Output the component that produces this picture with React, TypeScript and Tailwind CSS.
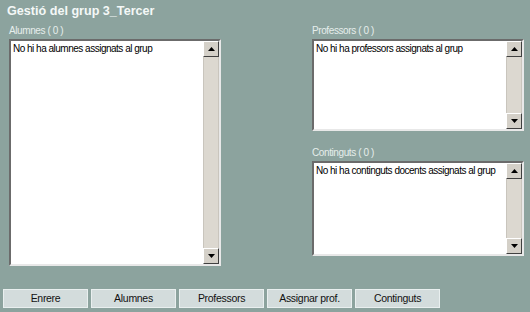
import React from "react";

// Gestió del grup - classic intranet panel with three list boxes

function Arrow({ down }: { down?: boolean }) {
  return (
    <div className="w-[16px] h-[16px] bg-[#d4d0c8] border border-t-white border-l-white border-r-[#404040] border-b-[#404040] flex items-center justify-center">
      <svg width="7" height="4" viewBox="0 0 7 4">
        {down ? <polygon points="0,0 7,0 3.5,4" fill="#000" /> : <polygon points="0,4 7,4 3.5,0" fill="#000" />}
      </svg>
    </div>
  );
}

function ListBox({ text, height }: { text: string; height: string }) {
  return (
    <div className={`flex w-[212px] ${height} bg-white border-2 border-t-[#6b6b6b] border-l-[#6b6b6b] border-r-[#e8e8e8] border-b-[#e8e8e8]`}>
      <div className="flex-1 min-w-0 overflow-hidden px-[2px] pt-[1px] text-[10px] leading-[13px] text-black tracking-[-0.5px] whitespace-nowrap">{text}</div>
      <div className="flex flex-col w-[16px] shrink-0 bg-[#dcd8d0]">
        <Arrow />
        <div className="flex-1 border-x border-[#c9c5bd]" />
        <Arrow down />
      </div>
    </div>
  );
}

function Label({ children }: { children: React.ReactNode }) {
  return <div className="text-[10px] leading-[13px] text-[#e6eeec] tracking-[-0.4px] mb-[2px]">{children}</div>;
}

const buttons = ["Enrere", "Alumnes", "Professors", "Assignar prof.", "Continguts"];

export default function App() {
  return (
    <div className="w-[530px] h-[312px] bg-[#8ca39e] flex flex-col" style={{ fontFamily: '"Liberation Sans", Arial, sans-serif' }}>
      <div className="pl-[7px] pt-[3px] text-[12.6px] leading-[16px] font-bold text-[#f4f8f7]">Gestió del grup 3_Tercer</div>
      <div className="flex pl-[9px] pt-[5px] gap-[91px]">
        <div className="flex flex-col">
          <Label>Alumnes ( 0 )</Label>
          <ListBox text="No hi ha alumnes assignats al grup" height="h-[227px]" />
        </div>
        <div className="flex flex-col">
          <Label>Professors ( 0 )</Label>
          <ListBox text="No hi ha professors assignats al grup" height="h-[92px]" />
          <div className="mt-[15px]">
            <Label>Continguts ( 0 )</Label>
          </div>
          <ListBox text="No hi ha continguts docents assignats al grup" height="h-[95px]" />
        </div>
      </div>
      <div className="flex gap-[3px] pl-[3px] mt-[23px]">
        {buttons.map((b) => (
          <div
            key={b}
            className="w-[85px] h-[19px] bg-[#d3dcdc] border border-[#e9efef] flex items-center justify-center text-[10.5px] tracking-[-0.3px] text-[#111]"
          >
            {b}
          </div>
        ))}
      </div>
    </div>
  );
}
